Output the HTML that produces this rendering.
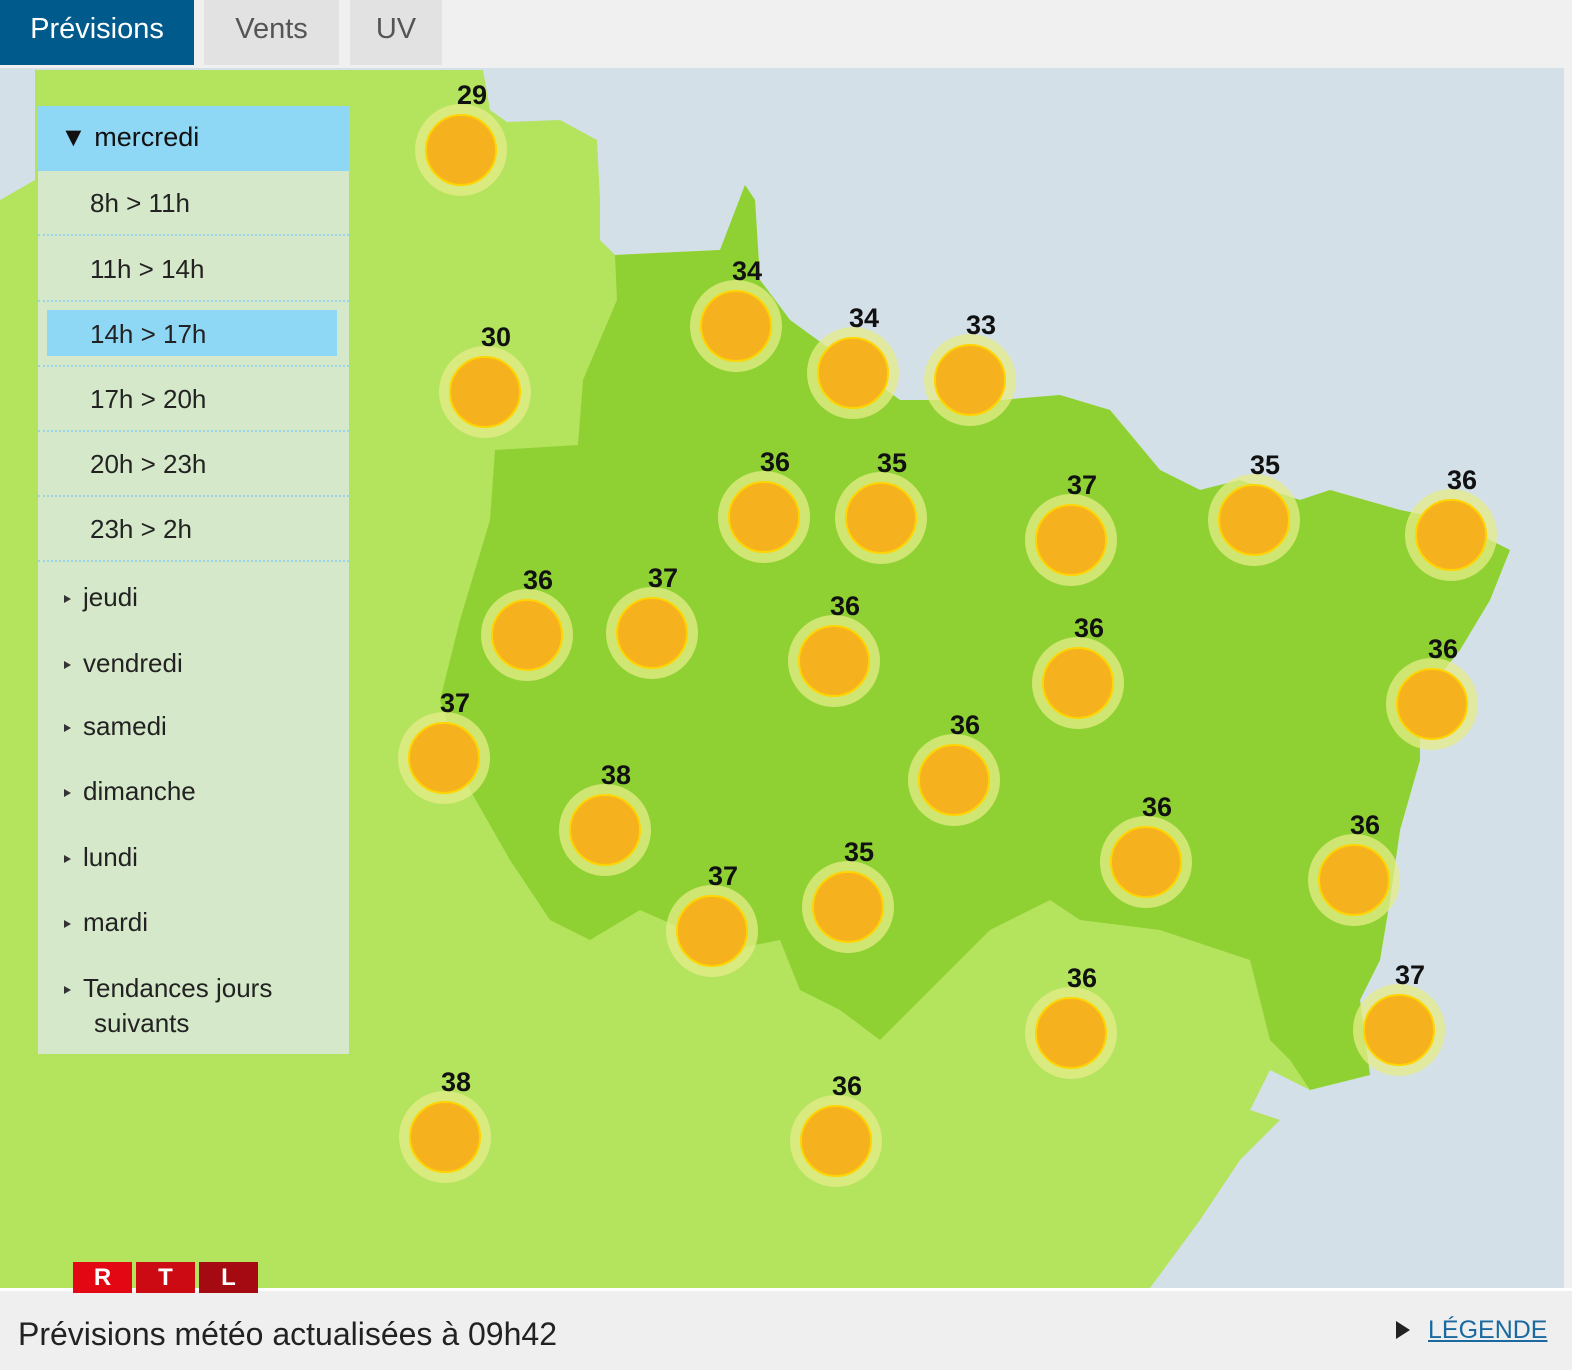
<!DOCTYPE html>
<html><head><meta charset="utf-8"><style>
*{margin:0;padding:0;box-sizing:border-box}
body{width:1572px;height:1370px;position:relative;overflow:hidden;background:#f0f0f0;font-family:"Liberation Sans",sans-serif}
.tab{position:absolute;top:0;height:65px;line-height:58px;font-size:29px;text-align:center;color:#555;background:#e2e2e2}
#map{position:absolute;left:0;top:68px}
.side{position:absolute;left:38px;top:106px;width:311px;height:948px;background:rgba(215,232,210,0.93)}
.hd{position:absolute;left:0;top:0;width:311px;height:65px;background:#8ed8f5;font-size:27px;line-height:62px;padding-left:22px;color:#111}
.row{position:absolute;left:0;width:311px;height:65px;border-bottom:2px dotted #9ad4e6;font-size:26px;line-height:64px;padding-left:52px;color:#222}
.sel{position:absolute;left:9px;top:204px;width:290px;height:46px;background:#8ed8f5}
.day{position:absolute;left:26px;font-size:26px;color:#222}
.day:before{content:"";display:inline-block;border-left:7px solid #333;border-top:4px solid transparent;border-bottom:4px solid transparent;margin-right:12px;vertical-align:middle}
.foot{position:absolute;left:0;top:1288px;width:1572px;height:82px;background:#efefef;border-top:3px solid #fff}
</style></head><body>
<div class="tab" style="left:0;width:194px;background:#005a8c;color:#fff">Prévisions</div>
<div class="tab" style="left:204px;width:135px">Vents</div>
<div class="tab" style="left:350px;width:92px">UV</div>
<svg id="map" width="1564" height="1220" viewBox="0 68 1564 1220">
<rect x="0" y="68" width="1564" height="1220" fill="#d3e0e8"/>
<polygon fill="#b4e35d" points="35,70 483,70 490,110 507,122 560,120 597,140 600,200 600,240 615,255 720,250 745,185 755,200 760,280 790,320 900,400 1000,400 1060,395 1110,410 1160,470 1200,490 1240,480 1300,500 1330,490 1400,510 1450,520 1510,550 1490,600 1460,650 1420,700 1420,760 1400,830 1390,900 1380,960 1360,1000 1370,1075 1310,1090 1270,1070 1250,1110 1280,1120 1240,1160 1200,1220 1150,1288 0,1288 0,200 35,180"/>
<polygon fill="#8fd132" points="615,255 720,250 745,185 755,200 760,280 790,320 900,400 1000,400 1060,395 1110,410 1160,470 1200,490 1240,480 1300,500 1330,490 1400,510 1450,520 1510,550 1490,600 1460,650 1420,700 1420,760 1400,830 1390,900 1380,960 1360,1000 1370,1075 1310,1090 1290,1060 1270,1040 1250,960 1160,930 1080,920 1050,900 990,930 960,960 930,990 880,1040 840,1010 800,990 780,940 730,950 640,910 590,940 550,920 510,860 470,790 440,700 460,620 490,520 495,450 578,445 583,380 617,300"/>
<g id="suns" font-family="Liberation Sans,sans-serif" font-weight="bold" font-size="27" fill="#111" text-anchor="middle"></g>
</svg>
<script>
var d=[[461,150,29],[485,392,30],[736,326,34],[853,373,34],[970,380,33],[764,517,36],[881,518,35],[1071,540,37],[1254,520,35],[1451,535,36],[527,635,36],[652,633,37],[834,661,36],[1078,683,36],[1432,704,36],[444,758,37],[954,780,36],[605,830,38],[1146,862,36],[1354,880,36],[712,931,37],[848,907,35],[1071,1033,36],[1399,1030,37],[445,1137,38],[836,1141,36]];
var s="";d.forEach(function(a){s+='<circle cx="'+a[0]+'" cy="'+a[1]+'" r="46" fill="#e6ec8a" opacity="0.75"/><circle cx="'+a[0]+'" cy="'+a[1]+'" r="35" fill="#f6b21e" stroke="#ffd400" stroke-width="2"/><text x="'+(a[0]+11)+'" y="'+(a[1]-46)+'">'+a[2]+'</text>';});
document.getElementById("suns").innerHTML=s;
</script>
<div class="side">
<div class="hd">▼ mercredi</div>
<div class="sel"></div>
<div class="row" style="top:65px">8h &gt; 11h</div>
<div class="row" style="top:131px">11h &gt; 14h</div>
<div class="row" style="top:196px">14h &gt; 17h</div>
<div class="row" style="top:261px">17h &gt; 20h</div>
<div class="row" style="top:326px">20h &gt; 23h</div>
<div class="row" style="top:391px">23h &gt; 2h</div>
<div class="day" style="top:476px">jeudi</div>
<div class="day" style="top:542px">vendredi</div>
<div class="day" style="top:605px">samedi</div>
<div class="day" style="top:670px">dimanche</div>
<div class="day" style="top:736px">lundi</div>
<div class="day" style="top:801px">mardi</div>
<div class="day" style="top:865px;line-height:35px">Tendances jours<br><span style="padding-left:30px">suivants</span></div>
</div>
<div class="foot">
<div style="position:absolute;left:18px;top:25px;font-size:32px;color:#222">Prévisions météo actualisées à 09h42</div>
<div style="position:absolute;left:1396px;top:30px;border-left:14px solid #222;border-top:9px solid transparent;border-bottom:9px solid transparent"></div>
<div style="position:absolute;left:1428px;top:25px;font-size:25px;color:#1a6aa0;text-decoration:underline">LÉGENDE</div>
</div>
<div style="position:absolute;left:73px;top:1262px;display:flex;gap:4px">
<div style="width:59px;height:31px;background:#e30613;color:#fff;font-weight:bold;font-size:24px;text-align:center;line-height:31px">R</div>
<div style="width:59px;height:31px;background:#cc0a14;color:#fff;font-weight:bold;font-size:24px;text-align:center;line-height:31px">T</div>
<div style="width:59px;height:31px;background:#a50a12;color:#fff;font-weight:bold;font-size:24px;text-align:center;line-height:31px">L</div>
</div>
</body></html>
